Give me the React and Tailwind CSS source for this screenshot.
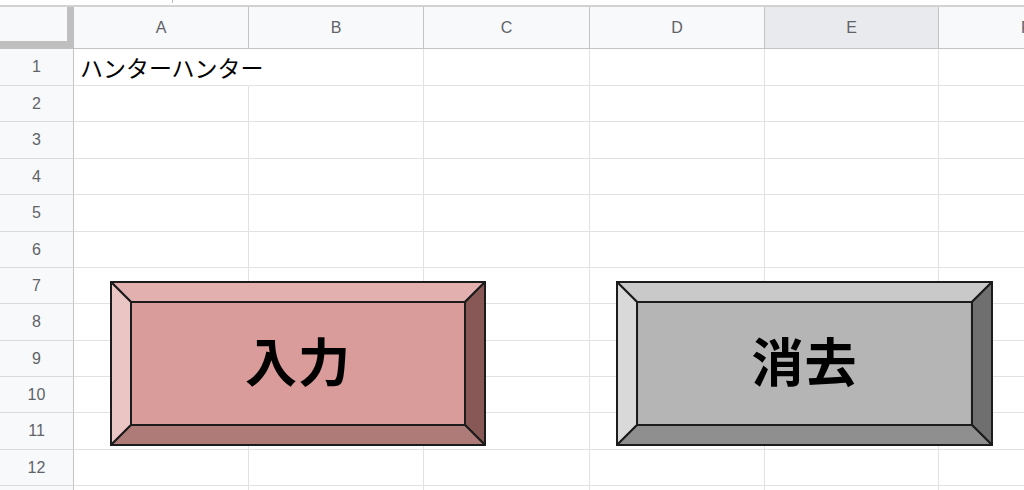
import React from "react";

const columns = [
  { label: "A", width: "w-[175px]" },
  { label: "B", width: "w-[175px]" },
  { label: "C", width: "w-[166px]" },
  { label: "D", width: "w-[175px]" },
  { label: "E", width: "w-[174px]", active: true },
  { label: "F", width: "w-[175px]" },
];

const rowHeights = [
  "h-[37px]", "h-[36px]", "h-[37px]", "h-[36px]", "h-[37px]", "h-[36px]",
  "h-[36px]", "h-[37px]", "h-[36px]", "h-[36px]", "h-[37px]", "h-[36px]",
  "h-[36px]",
];

const uiFont = { fontFamily: '"Liberation Sans", Arial, sans-serif' };
const jpFont = { fontFamily: '"Noto Sans CJK JP", "Noto Sans", sans-serif' };

function BevelButton({ label, className, colors }) {
  return (
    <div className={`absolute h-[165px] ${className}`}>
      <svg className="absolute inset-0 h-full w-full" viewBox="0 0 376 165" preserveAspectRatio="none">
        <g stroke="#1c1c1c" strokeWidth="2" strokeLinejoin="miter">
          <polygon points="1,1 375,1 355,21 21,21" fill={colors.top} />
          <polygon points="1,1 21,21 21,144 1,164" fill={colors.left} />
          <polygon points="375,1 375,164 355,144 355,21" fill={colors.right} />
          <polygon points="1,164 21,144 355,144 375,164" fill={colors.bottom} />
          <rect x="21" y="21" width="334" height="123" fill={colors.face} />
        </g>
      </svg>
      <div className="relative flex h-full items-center justify-center pb-[8px]">
        <span className="text-[52px] font-bold leading-none tracking-[1px] text-black" style={jpFont}>
          {label}
        </span>
      </div>
    </div>
  );
}

export default function App() {
  return (
    <div className="relative h-[490px] w-[1024px] overflow-hidden bg-white" style={uiFont}>
      {/* thin strip above the sheet */}
      <div className="h-[5px] pl-[172px]">
        <div className="h-[3px] w-px bg-[#bdbdbd]" />
      </div>
      <div className="h-[2px] bg-[#d2d2d2]" />

      {/* column headers */}
      <div className="flex h-[42px]">
        <div className="w-[74px] shrink-0 border-b-[8px] border-r-[7px] border-[#bfbfbf] bg-[#f8f9fa]" />
        {columns.map((col) => (
          <div
            key={col.label}
            className={`${col.width} flex shrink-0 items-center justify-center border-b border-r border-[#c4c4c4] text-[16px] text-[#5f6368] ${
              col.active ? "bg-[#e8eaed]" : "bg-[#f8f9fa]"
            }`}
          >
            {col.label}
          </div>
        ))}
      </div>

      {/* rows */}
      {rowHeights.map((h, i) => (
        <div key={i} className={`flex ${h}`}>
          <div className="flex w-[74px] shrink-0 items-center justify-center border-b border-r border-b-[#dadada] border-r-[#c4c4c4] bg-[#f8f9fa] text-[16px] text-[#5f6368]">
            {i < 12 ? i + 1 : ""}
          </div>
          {columns.map((col, j) => (
            <div
              key={col.label}
              className={`${col.width} flex shrink-0 items-center border-b border-r border-[#e2e2e2] ${
                i === 0 && j === 0 ? "border-r-white" : ""
              }`}
            >
              {i === 0 && j === 0 && (
                <span className="whitespace-nowrap pl-[6px] text-[23px] leading-none text-black" style={jpFont}>
                  ハンターハンター
                </span>
              )}
            </div>
          ))}
        </div>
      ))}

      <BevelButton
        label="入力"
        className="left-[110px] top-[281px] w-[376px]"
        colors={{ top: "#e2b1af", left: "#ebc5c4", right: "#875856", bottom: "#ae7b79", face: "#d99c9b" }}
      />
      <BevelButton
        label="消去"
        className="left-[616px] top-[281px] w-[377px]"
        colors={{ top: "#c9c9c9", left: "#d9d9d9", right: "#6f6f6f", bottom: "#8f8f8f", face: "#b5b5b5" }}
      />
    </div>
  );
}
